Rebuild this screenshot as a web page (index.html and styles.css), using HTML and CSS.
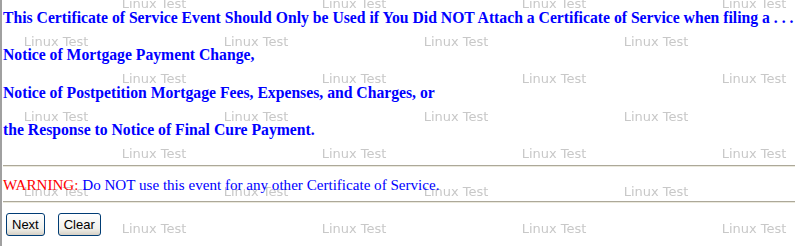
FILE: index.html
```html
<!DOCTYPE html>
<html>
<head>
<meta charset="utf-8">
<link rel="stylesheet" href="styles.css">
</head>
<body>
<svg class="watermark" xmlns="http://www.w3.org/2000/svg" aria-hidden="true">
  <defs>
    <pattern id="wm" patternUnits="userSpaceOnUse" x="0" y="-10" width="200" height="75">
      <text x="121.7" y="17.5" class="wm-text">Linux Test</text>
      <text x="23.7" y="55.5" class="wm-text">Linux Test</text>
    </pattern>
  </defs>
  <rect width="100%" height="100%" fill="url(#wm)"/>
</svg>
<div class="page">
  <div class="intro">
    <div class="line">This Certificate of Service Event Should Only be Used if You Did NOT Attach a Certificate of Service when filing a . . .</div>
    <div class="line">Notice of Mortgage Payment Change,</div>
    <div class="line">Notice of Postpetition Mortgage Fees, Expenses, and Charges, or</div>
    <div class="line">the Response to Notice of Final Cure Payment.</div>
  </div>
  <hr class="rule rule-top">
  <div class="warning"><span class="warn-label">WARNING:</span> Do NOT use this event for any other Certificate of Service.</div>
  <hr class="rule rule-bottom">
  <div class="actions">
    <button class="btn" type="button">Next</button>
    <button class="btn" type="button">Clear</button>
  </div>
</div>
</body>
</html>
```
FILE: styles.css
```css
html {
  background: #ffffff;
}
body {
  margin: 0;
  position: relative;
  min-height: 246px;
  overflow: hidden;
}
.watermark {
  position: absolute;
  left: 0;
  top: 0;
  width: 100%;
  height: 100%;
  z-index: -1;
}
.wm-text {
  font-family: "DejaVu Sans", sans-serif;
  font-size: 13px;
  fill: #c8c8c8;
}
.page {
  box-sizing: border-box;
  min-height: 246px;
  border-left: 2px solid #a0a0a0;
  padding: 9px 0 0 1px;
  display: flex;
  flex-direction: column;
}
.intro {
  display: flex;
  flex-direction: column;
  gap: 18.5px;
  margin-bottom: 18.5px;
}
.line {
  font-family: "Liberation Serif", "Times New Roman", serif;
  font-weight: bold;
  font-size: 15.7px;
  line-height: 18.75px;
  color: #0000ff;
  white-space: nowrap;
}
.rule {
  height: 0;
  border: 0;
  border-top: 1px solid #aca899;
  border-bottom: 1px solid #ebe9dd;
  width: 100%;
}
.rule-top {
  margin: 7px 0 9px 0;
}
.rule-bottom {
  margin: 7px 0 9.5px 0;
}
.warning {
  font-family: "Liberation Serif", "Times New Roman", serif;
  font-size: 15.1px;
  line-height: 18.4px;
  color: #0000ff;
  white-space: nowrap;
}
.warn-label {
  color: #ff0000;
}
.actions {
  display: flex;
  gap: 13px;
  padding-left: 3px;
}
.btn {
  box-sizing: border-box;
  height: 23px;
  padding: 0 5px;
  border: 1px solid #003c74;
  border-radius: 3px;
  background: linear-gradient(#ffffff, #f0f0ea 70%, #d6d0c5);
  font-family: "Liberation Sans", Arial, sans-serif;
  font-size: 13px;
  color: #000000;
}
```
